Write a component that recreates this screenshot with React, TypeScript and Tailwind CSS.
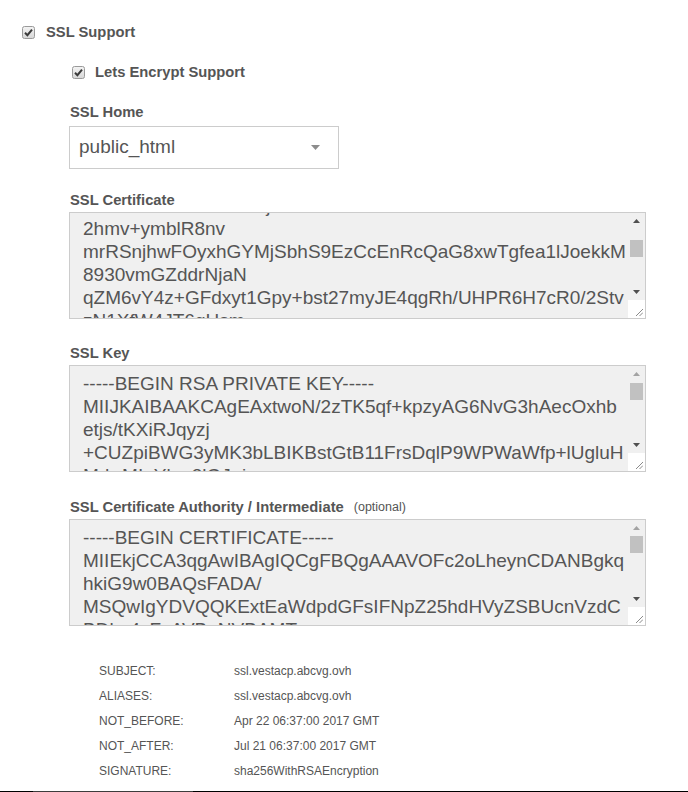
import React from 'react'

// ── Petite case à cocher façon Chrome classique ──
function Check() {
  return (
    <svg width="13" height="13" viewBox="0 0 13 13" className="shrink-0">
      <defs>
        <linearGradient id="cbg" x1="0" y1="0" x2="0" y2="1">
          <stop offset="0" stopColor="#f4f4f4" />
          <stop offset="1" stopColor="#d6d6d6" />
        </linearGradient>
      </defs>
      <rect x="0.5" y="0.5" width="12" height="12" rx="2" fill="url(#cbg)" stroke="#9a9a9a" />
      <path d="M3 6.8 L5.4 9.2 L10 3.6" fill="none" stroke="#3a3a3a" strokeWidth="2" />
    </svg>
  )
}

function Tri({ up, color }: { up?: boolean; color: string }) {
  return (
    <svg width="7" height="4" viewBox="0 0 7 4">
      <path d={up ? 'M0 4 L3.5 0 L7 4 Z' : 'M0 0 L7 0 L3.5 4 Z'} fill={color} />
    </svg>
  )
}

// ── Faux textarea : texte + barre de défilement + poignée ──
function Area({ lines, offset, thumb, upColor }: { lines: string[]; offset: string; thumb: string; upColor: string }) {
  return (
    <div className="flex w-[577px] h-[107px] border border-[#cccccc] bg-[#f0f0f0]">
      <div className="flex-1 overflow-hidden pl-[13px]">
        <div className={`${offset} text-[19px] leading-[23px] text-[#555] whitespace-nowrap`}>
          {lines.map((l, i) => (
            <div key={i}>{l}</div>
          ))}
        </div>
      </div>
      <div className="w-[17px] flex flex-col">
        <div className="h-[16px] flex items-center justify-center">
          <Tri up color={upColor} />
        </div>
        <div className="h-[54px]">
          <div className={`${thumb} h-[17px] mx-[2px] bg-[#c1c1c1]`} />
        </div>
        <div className="h-[17px] flex items-center justify-center">
          <Tri color="#505050" />
        </div>
        <div className="h-[18px] bg-white flex items-end justify-end">
          <svg width="8" height="8" viewBox="0 0 8 8" className="mb-[2px] mr-[2px]">
            <path d="M1 8 L8 1 M4.5 8 L8 4.5" stroke="#8a8a8a" strokeWidth="1" />
          </svg>
        </div>
      </div>
    </div>
  )
}

const details = [
  ['SUBJECT:', 'ssl.vestacp.abcvg.ovh'],
  ['ALIASES:', 'ssl.vestacp.abcvg.ovh'],
  ['NOT_BEFORE:', 'Apr 22 06:37:00 2017 GMT'],
  ['NOT_AFTER:', 'Jul 21 06:37:00 2017 GMT'],
  ['SIGNATURE:', 'sha256WithRSAEncryption'],
]

export default function App() {
  return (
    <div className="w-[688px] h-[792px] bg-white flex flex-col text-[#555] font-['Liberation_Sans',Arial,sans-serif]">
      {/* SSL Support */}
      <div className="flex items-center h-[14px] mt-[25px] pl-[22px]">
        <Check />
        <span className="ml-[11px] text-[14.75px] font-bold">SSL Support</span>
      </div>

      <div className="pl-[69px] flex flex-col">
        <div className="flex items-center h-[14px] mt-[26px] pl-[3px]">
          <Check />
          <span className="ml-[10px] text-[14.75px] font-bold">Lets Encrypt Support</span>
        </div>

        {/* SSL Home */}
        <div className="mt-[25px] pl-[1px] text-[14.75px] font-bold leading-[17px]">SSL Home</div>
        <div className="mt-[5px] w-[270px] h-[43px] border border-[#cccccc] bg-white flex items-center justify-between pl-[9px] pr-[18px]">
          <span className="text-[19px] text-[#555]">public_html</span>
          <svg width="9" height="5" viewBox="0 0 9 5">
            <path d="M0 0 L9 0 L4.5 5 Z" fill="#8c8c8c" />
          </svg>
        </div>

        {/* SSL Certificate */}
        <div className="mt-[23px] pl-[1px] text-[14.75px] font-bold leading-[17px]">SSL Certificate</div>
        <div className="mt-[3px]">
          <Area
            offset="-mt-[19px]"
            thumb="mt-[11px]"
            upColor="#505050"
            lines={[
              'HAZDCCBTSAwIBA1j',
              '2hmv+ymblR8nv',
              'mrRSnjhwFOyxhGYMjSbhS9EzCcEnRcQaG8xwTgfea1lJoekkM',
              '8930vmGZddrNjaN',
              'qZM6vY4z+GFdxyt1Gpy+bst27myJE4qgRh/UHPR6H7cR0/2Stv',
              'zN1XfW4JT6gHsm',
            ]}
          />
        </div>

        {/* SSL Key */}
        <div className="mt-[26px] pl-[1px] text-[14.75px] font-bold leading-[17px]">SSL Key</div>
        <div className="mt-[3px]">
          <Area
            offset="pt-[6px]"
            thumb="mt-[1px]"
            upColor="#a3a3a3"
            lines={[
              '-----BEGIN RSA PRIVATE KEY-----',
              'MIIJKAIBAAKCAgEAxtwoN/2zTK5qf+kpzyAG6NvG3hAecOxhb',
              'etjs/tKXiRJqyzj',
              '+CUZpiBWG3yMK3bLBIKBstGtB11FrsDqlP9WPWaWfp+lUgluH',
              'MdrrMIeYkm3lGJ+j',
            ]}
          />
        </div>

        {/* SSL CA */}
        <div className="mt-[27px] pl-[1px] flex items-center leading-[17px]">
          <span className="text-[14.75px] font-bold">SSL Certificate Authority / Intermediate</span>
          <span className="ml-[10px] text-[12.5px]">(optional)</span>
        </div>
        <div className="mt-[3px]">
          <Area
            offset="pt-[6px]"
            thumb="mt-0"
            upColor="#a3a3a3"
            lines={[
              '-----BEGIN CERTIFICATE-----',
              'MIIEkjCCA3qgAwIBAgIQCgFBQgAAAVOFc2oLheynCDANBgkq',
              'hkiG9w0BAQsFADA/',
              'MSQwIgYDVQQKExtEaWdpdGFsIFNpZ25hdHVyZSBUcnVzdC',
              'BDbz4xFzAVBgNVBAMT',
            ]}
          />
        </div>
      </div>

      {/* Détails du certificat */}
      <div className="mt-[33px] pl-[99px] flex flex-col text-[12px] text-[#555]">
        {details.map(([k, v]) => (
          <div key={k} className="flex leading-[25px]">
            <span className="w-[135px]">{k}</span>
            <span>{v}</span>
          </div>
        ))}
      </div>

      <div className="mt-auto flex h-px">
        <div className="w-[33px] bg-black" />
        <div className="w-[160px] bg-[#3c3c3c]" />
        <div className="flex-1 bg-black" />
      </div>
    </div>
  )
}
